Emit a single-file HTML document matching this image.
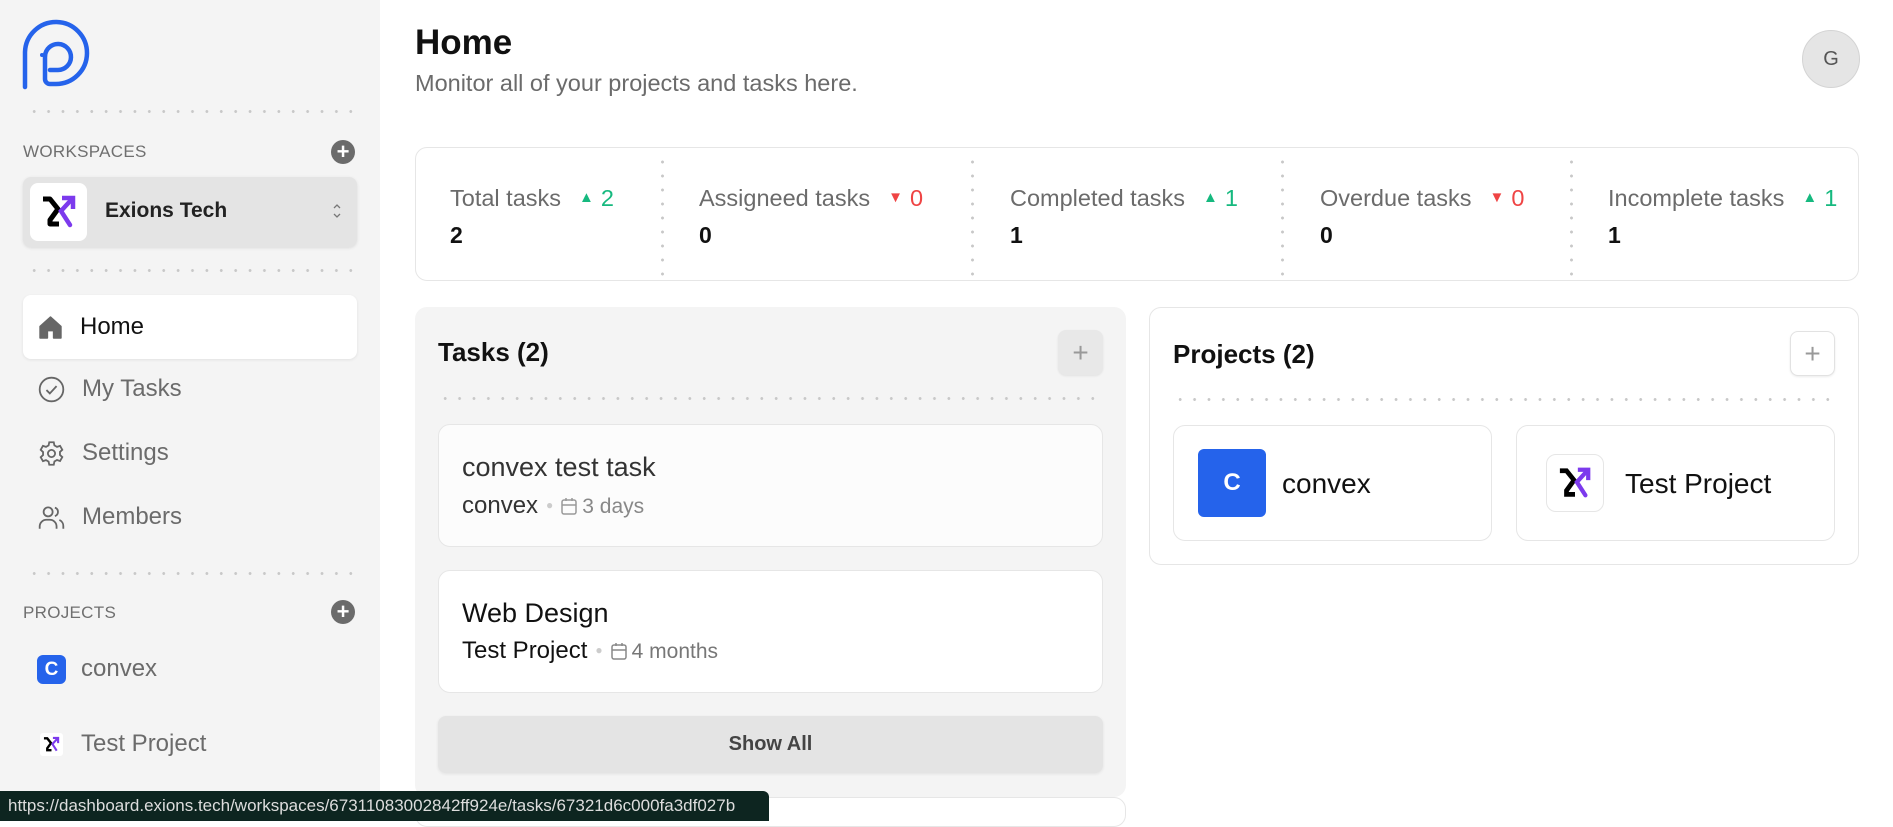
<!DOCTYPE html>
<html><head><meta charset="utf-8"><style>
*{box-sizing:border-box;margin:0;padding:0}
body{width:1893px;height:821px;overflow:hidden;background:#fff;font-family:"Liberation Sans",sans-serif;position:relative;color:#111}
.a{position:absolute}
.dots{position:absolute;height:3px;background-image:radial-gradient(circle,#c8c8c8 1.3px,transparent 1.6px);background-size:14.4px 3px}
.vd{position:absolute;width:3px;background-image:radial-gradient(circle,#c8c8c8 1.3px,transparent 1.6px);background-size:3px 14px}
.side{left:0;top:0;width:380px;height:821px;background:#f4f4f4}
.nav{position:absolute;left:23px;width:334px;height:64px;display:flex;align-items:center;padding-left:15px;font-size:24px;color:#6b6b6b}
.nav svg{margin-right:17px}
.lbl{font-size:17px;color:#6f6f6f;letter-spacing:.3px}
.plus{width:24px;height:24px;border-radius:50%;background:#6b6b6b;color:#fff;display:flex;align-items:center;justify-content:center;font-size:22px;font-weight:bold;line-height:1}
.stat{position:absolute;top:185px;font-size:23.5px;color:#6b6b6b;white-space:nowrap}
.stat b{display:block;color:#111;font-size:23px;margin-top:10px}
.up{color:#16b97f;margin-left:18px}.dn{color:#ef4444;margin-left:18px}
.tri{font-size:15px;vertical-align:4px;margin-right:7px}
.card{position:absolute;background:#fff;border:1px solid #e6e6e6;border-radius:12px}
.sq{position:absolute;width:45px;height:45px;border:1px solid #e2e2e2;border-radius:8px;background:#fff;color:#999;font-size:28px;display:flex;align-items:center;justify-content:center;box-shadow:0 1px 2px rgba(0,0,0,.08)}
.dot{color:#ccc;font-size:12px;margin:0 8px;vertical-align:4px}
.cal{vertical-align:-2px;margin-right:5px}
</style></head><body>
<div class="a side"></div>
<svg class="a" style="left:22px;top:18px" width="72" height="72" viewBox="0 0 72 72"><path d="M3 69 V34 A31 31 0 1 1 34 66 H28 A5 5 0 0 1 23 61 V38" fill="none" stroke="#2563eb" stroke-width="4.5" stroke-linecap="round"/><path d="M23 38 A13 13 0 1 1 36 52 H28" fill="none" stroke="#2563eb" stroke-width="4.5" stroke-linecap="round"/><circle cx="20" cy="37" r="2" fill="#2563eb"/></svg>
<div class="dots" style="left:27px;top:110px;width:328px"></div>
<div class="a lbl" style="left:23px;top:142px">WORKSPACES</div>
<div class="a plus" style="left:331px;top:140px">+</div>
<div class="a" style="left:23px;top:177px;width:334px;height:70px;background:#e4e4e4;border-radius:8px;box-shadow:0 1px 3px rgba(0,0,0,.1)"></div>
<div class="a" style="left:30px;top:183px;width:57px;height:58px;background:#fff;border-radius:8px"></div>
<svg class="a" style="left:41px;top:194px" width="36" height="36" viewBox="0 0 36 36"><path d="M2 5 H9 L17 15 L9 26 V30 H18" fill="none" stroke="#000" stroke-width="5" stroke-linejoin="round"/><path d="M21 4 H32 V15" fill="none" stroke="#7c3aed" stroke-width="4.5"/><path d="M31 5 L20 17 L29 31" fill="none" stroke="#7c3aed" stroke-width="4.5" stroke-linecap="round"/></svg>
<div class="a" style="left:105px;top:199px;font-size:21px;font-weight:bold;color:#222">Exions Tech</div>
<svg class="a" style="left:331px;top:201px" width="12" height="20" viewBox="0 0 12 20"><path d="M3 7 L6 4 L9 7 M3 13 L6 16 L9 13" fill="none" stroke="#777" stroke-width="1.3"/></svg>
<div class="dots" style="left:27px;top:269px;width:328px"></div>
<div class="nav" style="top:295px;background:#fff;border-radius:8px;box-shadow:0 1px 3px rgba(0,0,0,.08);color:#111"><svg width="25" height="25" viewBox="0 0 24 24"><path d="M2 11 L12 2 L22 11 V22 H15 V15 H9 V22 H2 Z" fill="#666" stroke="#666" stroke-width="1.5" stroke-linejoin="round"/></svg>Home</div>
<div class="nav" style="top:357px"><svg width="27" height="27" viewBox="0 0 24 24"><circle cx="12" cy="12" r="10.5" fill="none" stroke="#666" stroke-width="1.6"/><path d="M7.5 12.5 L10.5 15.5 L16.5 9" fill="none" stroke="#666" stroke-width="1.6"/></svg>My Tasks</div>
<div class="nav" style="top:421px"><svg width="27" height="27" viewBox="0 0 24 24" fill="none" stroke="#666" stroke-width="1.6"><circle cx="12" cy="12" r="3.2"/><path d="M10 2h4l.6 2.8 2.3 1.3 2.7-.9 2 3.5-2.1 1.9v2.7l2.1 1.9-2 3.5-2.7-.9-2.3 1.3L14 22h-4l-.6-2.8-2.3-1.3-2.7.9-2-3.5 2.1-1.9v-2.7L2.4 8.7l2-3.5 2.7.9 2.3-1.3z"/></svg>Settings</div>
<div class="nav" style="top:485px"><svg width="27" height="27" viewBox="0 0 24 24" fill="none" stroke="#666" stroke-width="1.6"><circle cx="9" cy="7" r="4"/><path d="M1.5 22v-2a6 6 0 0 1 6-6h3a6 6 0 0 1 6 6v2M15 3.2a4 4 0 0 1 0 7.6M19 14.2a6 6 0 0 1 3.5 5.8v2"/></svg>Members</div>
<div class="dots" style="left:27px;top:572px;width:328px"></div>
<div class="a lbl" style="left:23px;top:603px">PROJECTS</div>
<div class="a plus" style="left:331px;top:600px">+</div>
<div class="a" style="left:37px;top:655px;width:29px;height:29px;border-radius:6px;background:#2563eb;color:#fff;font-weight:bold;font-size:19px;text-align:center;line-height:29px">C</div>
<div class="a" style="left:81px;top:655px;font-size:24px;color:#6b6b6b">convex</div>
<div class="a" style="left:40px;top:733px;width:23px;height:23px;background:#fff;border-radius:3px"></div>
<svg class="a" style="left:43px;top:736px" width="17" height="17" viewBox="0 0 36 36"><path d="M2 5 H9 L17 15 L9 26 V30 H18" fill="none" stroke="#000" stroke-width="5"/><path d="M21 4 H32 V15 M31 5 L20 17 L29 31" fill="none" stroke="#7c3aed" stroke-width="4.5"/></svg>
<div class="a" style="left:81px;top:730px;font-size:24px;color:#6b6b6b">Test Project</div>

<div class="a" style="left:415px;top:23px;font-size:35px;font-weight:bold">Home</div>
<div class="a" style="left:415px;top:70px;font-size:23.5px;color:#6b6b6b">Monitor all of your projects and tasks here.</div>
<div class="a" style="left:1802px;top:30px;width:58px;height:58px;border-radius:50%;background:#e5e5e5;border:1px solid #d4d4d4;color:#555;font-size:20px;text-align:center;line-height:56px">G</div>

<div class="card" style="left:415px;top:147px;width:1444px;height:134px"></div>
<div class="vd" style="left:661px;top:155px;height:122px"></div>
<div class="vd" style="left:971px;top:155px;height:122px"></div>
<div class="vd" style="left:1281px;top:155px;height:122px"></div>
<div class="vd" style="left:1570px;top:155px;height:122px"></div>
<div class="stat" style="left:450px">Total tasks<span class="up"><span class="tri">▲</span>2</span><b>2</b></div>
<div class="stat" style="left:699px">Assigneed tasks<span class="dn"><span class="tri">▼</span>0</span><b>0</b></div>
<div class="stat" style="left:1010px">Completed tasks<span class="up"><span class="tri">▲</span>1</span><b>1</b></div>
<div class="stat" style="left:1320px">Overdue tasks<span class="dn"><span class="tri">▼</span>0</span><b>0</b></div>
<div class="stat" style="left:1608px">Incomplete tasks<span class="up"><span class="tri">▲</span>1</span><b>1</b></div>

<div class="a" style="left:415px;top:307px;width:711px;height:490px;background:#f4f4f4;border-radius:12px"></div>
<div class="a" style="left:438px;top:337px;font-size:26px;font-weight:bold">Tasks (2)</div>
<div class="sq" style="left:1058px;top:330px;background:#e8e8e8;border-color:#e8e8e8">+</div>
<div class="dots" style="left:438px;top:397px;width:666px"></div>
<div class="card" style="left:438px;top:424px;width:665px;height:123px;background:#fcfcfc"></div>
<div class="a" style="left:462px;top:452px;font-size:27px;color:#333">convex test task</div>
<div class="a" style="left:462px;top:492px;font-size:24px;color:#333">convex<span class="dot">●</span><svg class="cal" width="16" height="18" viewBox="0 0 16 18" fill="none" stroke="#999" stroke-width="1.5"><rect x="1" y="3" width="14" height="14" rx="2"/><path d="M1 8H15M5 1V4M11 1V4"/></svg><span style="color:#888;font-size:21px">3 days</span></div>
<div class="card" style="left:438px;top:570px;width:665px;height:123px"></div>
<div class="a" style="left:462px;top:598px;font-size:27px;color:#111">Web Design</div>
<div class="a" style="left:462px;top:637px;font-size:24px;color:#111">Test Project<span class="dot">●</span><svg class="cal" width="16" height="18" viewBox="0 0 16 18" fill="none" stroke="#888" stroke-width="1.5"><rect x="1" y="3" width="14" height="14" rx="2"/><path d="M1 8H15M5 1V4M11 1V4"/></svg><span style="color:#777;font-size:21px">4 months</span></div>
<div class="a" style="left:438px;top:716px;width:665px;height:57px;background:#e4e4e4;border-radius:8px;box-shadow:0 1px 3px rgba(0,0,0,.08);text-align:center;line-height:57px;font-size:20px;font-weight:bold;color:#444">Show All</div>
<div class="a" style="left:415px;top:797px;width:711px;height:30px;background:#fff;border:1px solid #e6e6e6;border-radius:12px"></div>

<div class="card" style="left:1149px;top:307px;width:710px;height:258px"></div>
<div class="a" style="left:1173px;top:339px;font-size:26px;font-weight:bold">Projects (2)</div>
<div class="sq" style="left:1790px;top:331px">+</div>
<div class="dots" style="left:1173px;top:398px;width:662px"></div>
<div class="card" style="left:1173px;top:425px;width:319px;height:116px"></div>
<div class="a" style="left:1198px;top:449px;width:68px;height:68px;border-radius:6px;background:#2563eb;color:#fff;font-size:24px;font-weight:bold;text-align:center;line-height:68px">C</div>
<div class="a" style="left:1282px;top:468px;font-size:28px">convex</div>
<div class="card" style="left:1516px;top:425px;width:319px;height:116px"></div>
<div class="a" style="left:1546px;top:454px;width:58px;height:58px;border:1px solid #e6e6e6;border-radius:10px;background:#fff"></div>
<svg class="a" style="left:1558px;top:466px" width="34" height="34" viewBox="0 0 36 36"><path d="M2 5 H9 L17 15 L9 26 V30 H18" fill="none" stroke="#000" stroke-width="5"/><path d="M21 4 H32 V15" fill="none" stroke="#7c3aed" stroke-width="4.5"/><path d="M31 5 L20 17 L29 31" fill="none" stroke="#7c3aed" stroke-width="4.5" stroke-linecap="round"/></svg>
<div class="a" style="left:1625px;top:468px;font-size:28px">Test Project</div>

<div class="a" style="left:0;top:791px;width:769px;height:30px;background:#0d2520;border-radius:0 6px 0 0;color:#ddd;font-size:17px;line-height:30px;padding-left:8px;white-space:nowrap;overflow:hidden">https://dashboard.exions.tech/workspaces/67311083002842ff924e/tasks/67321d6c000fa3df027b</div>
</body></html>
